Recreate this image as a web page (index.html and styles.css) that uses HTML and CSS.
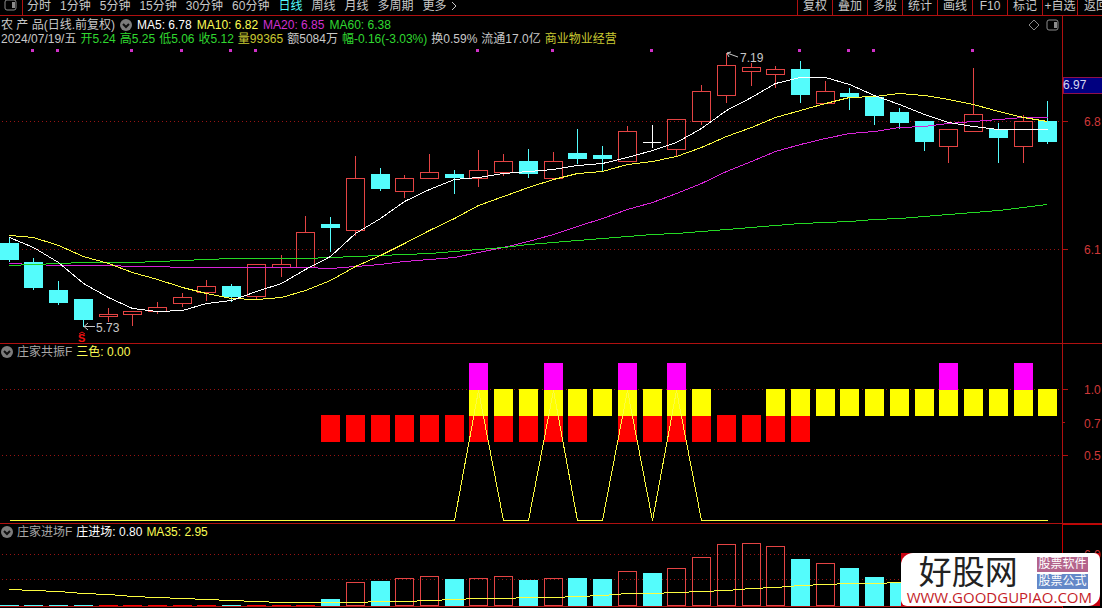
FILE: index.html
```html
<!DOCTYPE html>
<html lang="zh-CN">
<head>
<meta charset="utf-8">
<title>农产品 日线</title>
<link rel="stylesheet" href="styles.css">
</head>
<body>
<nav class="toolbar">
  <button class="layout-btn" aria-label="布局"><svg class="icon-layout" viewBox="0 0 13 12"><rect x="1" y="1" width="11" height="10" rx="2"/><path class="solid" d="M8 3h3v6h-3z"/></svg></button>
  <div class="periods">
    <button>分时</button><button>1分钟</button><button>5分钟</button><button>15分钟</button><button>30分钟</button><button>60分钟</button><button class="active">日线</button><button>周线</button><button>月线</button><button>多周期</button><button class="more">更多<svg class="icon-more" viewBox="0 0 6 10"><path d="M1 1l4 4-4 4"/></svg></button>
  </div>
  <div class="tools">
    <button>复权</button><button>叠加</button><button>多股</button><button>统计</button><button>画线</button><button>F10</button><button>标记</button><button>+自选</button><button class="back">返回</button>
  </div>
</nav>
<main class="panels">
  <section class="panel price">
    <div class="plot">
      <header class="head">
        <div class="row">
          <span class="pad">农 产 品(日线.前复权)</span>
          <button class="fold" aria-label="展开"><svg viewBox="0 0 12 12"><circle cx="6" cy="6" r="6"/><path d="M3 5l3 3 3-3"/></svg></button>
          <span class="white">MA5: 6.78</span><span class="yellow">MA10: 6.82</span><span class="magenta">MA20: 6.85</span><span class="green">MA60: 6.38</span>
          <span class="corner">
            <svg class="icon-diamond" viewBox="0 0 12 12"><path d="M6 1l5 5-5 5-5-5z"/></svg>
            <svg class="icon-layout" viewBox="0 0 13 12"><rect x="1" y="1" width="11" height="10" rx="2"/><path class="solid" d="M8 3h3v6h-3z"/></svg>
          </span>
        </div>
        <div class="row">
          <span class="pad">2024/07/19/五</span><span class="green">开5.24</span><span class="green">高5.25</span><span class="green">低5.06</span><span class="green">收5.12</span><span class="gold">量99365</span><span>额5084万</span><span class="green">幅-0.16(-3.03%)</span><span>换0.59%</span><span>流通17.0亿</span><span class="gold">商业物业经营</span>
        </div>
      </header>
      <svg class="chart" id="price" viewBox="0 46 1062 297" preserveAspectRatio="none"></svg>
    </div>
    <svg class="axis" viewBox="1062 16 40 327" preserveAspectRatio="none">
      <path class="rule" d="M1062.5 16V343M1063 121.5h5M1063 249.5h5"/>
      <rect class="tag" x="1063.5" y="77.5" width="40" height="16"/>
      <text class="tag-text" x="1063" y="89">6.97</text>
      <text x="1084" y="126">6.8</text>
      <text x="1084" y="254">6.1</text>
    </svg>
  </section>
  <section class="panel signal">
    <div class="plot">
      <header class="head slim"><div class="row">
        <button class="fold" aria-label="展开"><svg viewBox="0 0 12 12"><circle cx="6" cy="6" r="6"/><path d="M3 5l3 3 3-3"/></svg></button>
        <span class="dim">庄家共振F</span><span class="yellow">三色: 0.00</span>
      </div></header>
      <svg class="chart" id="signal" viewBox="0 359 1062 164" preserveAspectRatio="none"></svg>
    </div>
    <svg class="axis" viewBox="1062 344 40 179" preserveAspectRatio="none">
      <path class="rule" d="M1062.5 344V523M1063 389.5h5M1063 422.5h2M1063 455.5h5"/>
      <text x="1084" y="394">1.0</text>
      <text x="1084" y="428">0.7</text>
      <text x="1084" y="460">0.5</text>
    </svg>
  </section>
  <section class="panel volume">
    <div class="plot">
      <header class="head slim"><div class="row">
        <button class="fold" aria-label="展开"><svg viewBox="0 0 12 12"><circle cx="6" cy="6" r="6"/><path d="M3 5l3 3 3-3"/></svg></button>
        <span class="dim">庄家进场F</span><span class="white">庄进场: 0.80</span><span class="yellow">MA35: 2.95</span>
      </div></header>
      <svg class="chart" id="volume" viewBox="0 539 1062 69" preserveAspectRatio="none"></svg>
    </div>
    <svg class="axis" viewBox="1062 524 40 84" preserveAspectRatio="none">
      <path class="rule bright" d="M1062.5 524V608M1062 524.5h40"/>
      <text x="1084" y="559">6.0</text>
    </svg>
  </section>
</main>
<aside class="brand">
  <div class="brand-card">
    <div class="brand-top">
      <strong>好股网</strong>
      <div class="badges"><span class="badge rose">股票软件</span><span class="badge blue">股票公式</span></div>
    </div>
    <a class="brand-url" href="#">WWW.GOODGUPIAO.COM</a>
  </div>
</aside>
<script src="script.js"></script>
</body>
</html>
```
FILE: styles.css
```css
* { box-sizing: border-box; }
html, body { height: 100%; }
body {
  margin: 0;
  display: flex;
  flex-direction: column;
  position: relative;
  overflow: hidden;
  background: #000;
  color: #c8c8c8;
  font: 12px/14px "Liberation Sans", "Noto Sans CJK SC", sans-serif;
}
button {
  padding: 0;
  border: 0;
  background: none;
  color: inherit;
  font: inherit;
  white-space: nowrap;
  cursor: pointer;
}
svg { display: block; }

.toolbar {
  flex: none;
  display: flex;
  align-items: flex-end;
  height: 16px;
  overflow: hidden;
  border-bottom: 1px solid #b01010;
}
.layout-btn {
  flex: none;
  width: 23px;
  height: 16px;
  padding: 0 0 5px 4px;
  border-right: 1px solid #b01010;
}
.icon-layout { width: 13px; height: 12px; fill: none; stroke: #8c8c8c; }
.icon-layout .solid { fill: #8c8c8c; stroke: none; }
.periods { display: flex; gap: 9px; padding: 0 0 2px 4px; }
.active { color: #54fcfc; }
.more { display: flex; align-items: center; gap: 4px; }
.icon-more { width: 6px; height: 10px; fill: none; stroke: #c8c8c8; }
.tools { display: flex; margin-left: auto; }
.tools button {
  width: 35px;
  height: 16px;
  padding-bottom: 2px;
  line-height: 14px;
  border-left: 1px solid #b01010;
}
.tools .back { width: 25px; padding-left: 6px; text-align: left; overflow: hidden; }

.panels {
  flex: 1;
  min-height: 0;
  display: grid;
  grid-template-rows: 328fr 180fr 84fr;
}
.panel {
  min-height: 0;
  display: grid;
  grid-template-columns: minmax(0, 1fr) 40px;
  grid-template-rows: minmax(0, 1fr);
  border-bottom: 1px solid #b01010;
}
.volume { border-bottom: 0; }
.plot { display: flex; flex-direction: column; min-height: 0; }
.head { flex: none; padding-top: 2px; }
.slim { padding: 1px 0 0 1px; }
.row { display: flex; align-items: center; gap: 4px; height: 14px; white-space: nowrap; }
.price .row:first-child { gap: 5px; }
.pad { padding-left: 1px; }
.fold svg { width: 12px; height: 12px; }
.fold circle { fill: #7c7c7c; }
.fold path { fill: none; stroke: #101010; stroke-width: 2; }
.corner { display: flex; align-items: center; gap: 6px; margin-left: auto; padding-right: 3px; }
.icon-diamond { width: 12px; height: 12px; fill: none; stroke: #8c8c8c; }

.white { color: #fff; }
.yellow { color: #fcfc54; }
.gold { color: #c8c832; }
.magenta { color: #d030d0; }
.green { color: #30d830; }
.dim { color: #a8a8a8; }

.chart { flex: 1; min-height: 0; width: 100%; }
.axis { width: 100%; height: 100%; font-size: 12px; fill: #d03838; }
.rule { fill: none; stroke: #b01010; shape-rendering: crispEdges; }
.bright { stroke: #c80000; }
.tag { fill: #000080; stroke: #90104c; }
.tag-text { fill: #d8d8f0; }

.grid { stroke: #981414; stroke-dasharray: 1 3; }
.crisp { shape-rendering: crispEdges; }
.up { fill: none; stroke: #e44444; }
.down { fill: #54fcfc; stroke: none; }
.down-wick { stroke: #54fcfc; }
.flat { stroke: #fff; }
.line { fill: none; stroke-width: 1; }
.line-white { stroke: #fff; }
.line-yellow { stroke: #fcfc40; }
.line-magenta { stroke: #d824d8; }
.line-green { stroke: #24d824; }
.dot { fill: #d030c8; }
.bar-magenta { fill: #f0f; }
.bar-yellow { fill: #ff0; }
.bar-red { fill: #f00; }
.note { fill: #c8c8c8; font-size: 12px; }
.arrow { fill: none; stroke: #c8c8c8; }
.sell { fill: #f01010; font-size: 11px; font-weight: 700; }
.sell-mark { fill: none; stroke: #f01010; }

.brand {
  position: absolute;
  right: 2px;
  bottom: 2px;
  background: #c80010;
}
.brand-card {
  padding: 3px 7px 1px 6px;
  background: #fff;
  border-radius: 12px 6px 12px 6px;
}
.brand-top { display: flex; align-items: center; justify-content: space-between; padding: 0 5px 0 12px; }
.brand-top strong { color: #222; font-size: 33px; font-weight: 400; line-height: 34px; }
.badges { display: flex; flex-direction: column; gap: 2px; }
.badge { width: 51px; color: #fff; line-height: 15px; text-align: center; white-space: nowrap; }
.rose { background: #b4648c; }
.blue { background: #6488c8; }
.brand-url {
  display: block;
  padding-right: 1px;
  color: #c41c28;
  font: 15px/15px "Open Sans", sans-serif;
  text-decoration: none;
}
```
FILE: script.js
```js
const STEP = 24.73;
const cx = i => Math.floor(9.1 + i * STEP);

// direction, body top, body bottom, high, low
const candles = [
  ['d',243,260,237,262],['d',262,288,258,290],['d',290,303,281,305],['d',299,320,299,327],
  ['u',314,317,308,322],['u',311,315,311,326],['u',307,312,302,314],['u',297,304,293,307],
  ['u',286,293,280,301],['d',286,297,284,302],['u',264,297,264,300],['u',264,268,255,277],
  ['u',232,268,216,268],['d',224,228,217,252],['u',178,231,156,236],['d',174,189,168,191],
  ['u',178,192,175,198],['u',172,179,154,179],['d',174,178,170,194],['u',170,179,150,187],
  ['u',161,173,154,176],['d',161,174,149,178],['u',161,179,152,179],['d',153,159,129,164],
  ['d',155,159,146,172],['u',131,162,126,162],['f',142,143,125,148],['u',119,150,119,156],
  ['u',91,122,85,125],['u',65,96,53,103],['u',67,72,63,86],['u',69,75,66,88],
  ['d',69,95,61,103],['u',91,104,81,104],['d',93,97,88,110],['d',97,116,97,125],
  ['d',112,123,108,129],['d',121,142,121,151],['u',129,147,129,163],['u',114,132,68,132],
  ['d',129,138,123,163],['u',121,147,115,163],['d',121,142,101,144]
];
const ma5 = [237,247,262,283,297,308,311,310,303,300,291,283,269,256,233,218,201,189,179,177,173,171,169,165,163,157,150,142,128,110,97,83,77,77,84,95,104,114,122,126,129,129,129];
const ma10 = [235,237,245,256,263,272,279,287,293,298,299,297,290,280,266,255,243,230,218,205,196,187,179,173,171,164,161,156,147,136,127,117,110,103,97,96,93,95,99,104,111,117,121];
const ma20 = [263,264,265,265,265,266,266,267,267,267,267,267,267,268,266,264,261,259,257,252,247,241,234,226,218,209,202,193,183,171,161,151,144,138,133,131,127,126,123,121,119,117,117];
const ma60 = [265,264,263,262,262,262,261,260,259,258,258,258,258,257,256,255,254,253,251,249,247,244,242,240,238,236,234,233,231,229,227,225,223,222,221,219,218,216,214,212,210,207,204];
const volumeTops = [605,605,605,605,605,605,605,605,605,605,605,605,605,599,582,581,578,576,579,578,576,580,578,578,579,571,573,568,557,544,543,546,559,563,568,577,582,585,588,590,592,594,596];
const volumeMa = [589,590,591,593,594,596,597,598,599,600,601,602,602,602,602,601,601,600,599,598,598,597,597,596,595,593,593,592,591,590,588,587,585,584,583,583,582,582,581,581,580,580,579];

const range = (a, b) => Array.from({ length: b - a + 1 }, (_, k) => a + k);
const rect = (cls, x, y, w, h) => `<rect class="${cls} crisp" x="${x}" y="${y}" width="${w}" height="${h}"/>`;
const path = (cls, d) => `<path class="${cls} crisp" d="${d}"/>`;
const grid = ys => ys.map(y => path('grid', `M2 ${y + 0.5}H1062`)).join('');
const curve = (cls, ys) =>
  `<polyline class="line crisp ${cls}" points="${ys.map((y, i) => `${cx(i) + 0.5},${y + 0.5}`).join(' ')}"/>`;

function candle([kind, top, bottom, high, low], i) {
  const x = cx(i), m = x + 0.5;
  if (kind === 'd') return path('down-wick', `M${m} ${high}V${low}`) + rect('down', x - 9, top, 19, bottom - top);
  if (kind === 'f') return path('flat', `M${m} ${high}V${low}M${x - 9} ${top + 0.5}h18`);
  return path('up', `M${m} ${high}V${top}M${m} ${bottom}V${low}`) +
    rect('up', x - 8.5, top + 0.5, 18, bottom - top - 1);
}

document.getElementById('price').innerHTML =
  grid([121, 249]) +
  [1,2,5,7,9,10,19,22,26,32,34,35,39].map(i => rect('dot', cx(i) - 2, 49, 3, 3)).join('') +
  candles.map(candle).join('') +
  curve('line-magenta', ma20) + curve('line-green', ma60) + curve('line-yellow', ma10) + curve('line-white', ma5) +
  '<path class="arrow" d="M738 57L727 53M731 52l-4 1 2 4"/><text class="note" x="740" y="62">7.19</text>' +
  '<path class="arrow" d="M95 326.500H84M88 323l-4 3.500 4 3.500"/><text class="note" x="96" y="332">5.73</text>' +
  '<text class="sell" x="78" y="342">S</text><path class="sell-mark" d="M79 334l3-2 3 2"/>';

const peaks = [19, 22, 25, 27];
document.getElementById('signal').innerHTML =
  grid([389, 455]) +
  [...range(13, 23), ...range(25, 32)].map(i => rect('bar-red', cx(i) - 9, 415, 19, 27)).join('') +
  [...range(19, 28), ...range(31, 42)].map(i => rect('bar-yellow', cx(i) - 9, 389, 19, 27)).join('') +
  [19,22,25,27,38,41].map(i => rect('bar-magenta', cx(i) - 9, 363, 19, 27)).join('') +
  curve('line-yellow', range(0, 42).map(i => peaks.includes(i) ? 390 : 520));

document.getElementById('volume').innerHTML =
  grid([554, 579]) + path('rule', 'M0 606.5H1062') +
  volumeTops.map((top, i) => {
    const x = cx(i) - 9, down = candles[i][0] !== 'u';
    if (top === 605) return rect(down ? 'down' : 'bar-red', x, 605, 19, 1);
    return down ? rect('down', x, top, 19, 606 - top) : rect('up', x + 0.5, top + 0.5, 18, 605 - top);
  }).join('') +
  curve('line-yellow', volumeMa);
```
